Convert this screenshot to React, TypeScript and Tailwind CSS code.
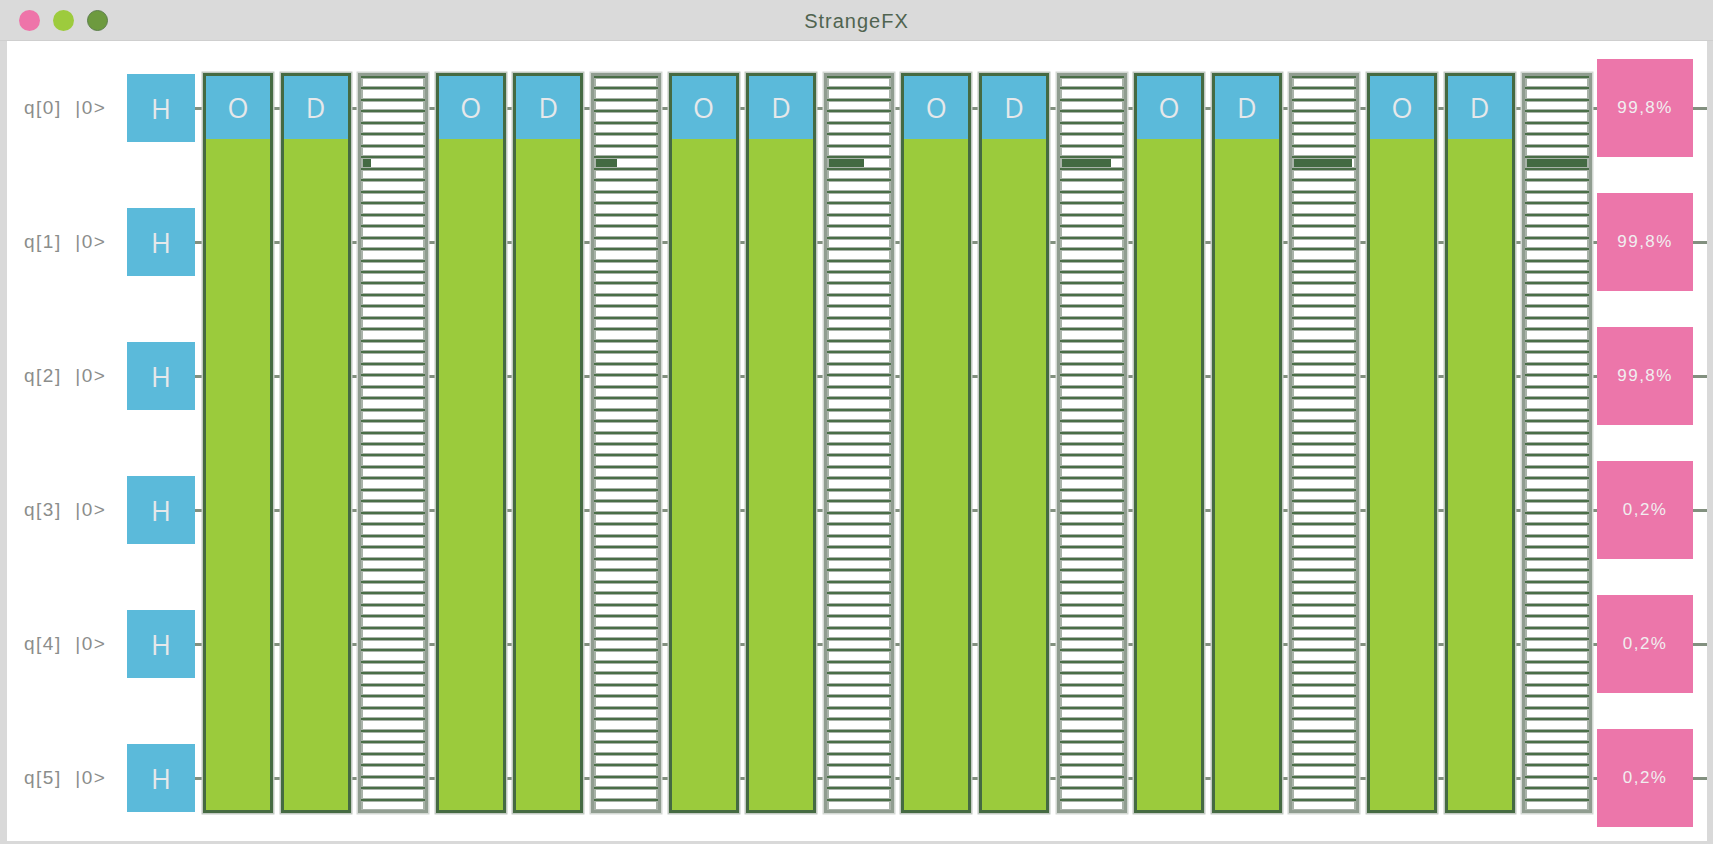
import React from 'react'

const QUBITS = [0, 1, 2, 3, 4, 5]
const RESULTS = ['99,8%', '99,8%', '99,8%', '0,2%', '0,2%', '0,2%']

// kans op |000111> na elke grover-stap
const FILLS = [13.5, 34.4, 59, 82, 96, 99.7]
const MARKED = 7

function GateColumn({ label }: { label: string }) {
  return (
    <div className="w-[70px] h-[740px] shrink-0 border-[3px] border-[#456a42] bg-[#9bcb3c] flex flex-col shadow-[0_0_0_1.5px_#c2c9c2]">
      <div className="h-[63px] bg-[#5bbada] flex items-center justify-center text-[27px] leading-none text-[#e6e8ea] font-['Open_Sans',sans-serif]">
        {label}
      </div>
    </div>
  )
}

function StateColumn({ fill }: { fill: number }) {
  const rows = Array.from({ length: 64 }, (_, i) => i)
  return (
    <div className="w-[70px] h-[740px] shrink-0 border-[3px] border-[#909d90] bg-white flex flex-col shadow-[0_0_0_1.5px_#d3d8d3]">
      {rows.map((r) => (
        <div
          key={r}
          className="flex-1 border-t-2 border-[#4a6e47] bg-[#a9b3a9] px-[2px] py-[1px]"
        >
          <div className="h-full bg-white">
            {r === MARKED && (
              <div
                className="h-full bg-[#436a42]"
                style={{ width: `${fill}%` }}
              />
            )}
          </div>
        </div>
      ))}
    </div>
  )
}

export default function App() {
  const columns: { kind: 'O' | 'D' | 'S'; fill: number }[] = []
  FILLS.forEach((f) => {
    columns.push({ kind: 'O', fill: 0 })
    columns.push({ kind: 'D', fill: 0 })
    columns.push({ kind: 'S', fill: f })
  })

  return (
    <div className="w-[1713px] h-[844px] bg-[#d9d9d9] flex flex-col overflow-hidden font-['Liberation_Sans',Arial,sans-serif]">
      {/* titelbalk */}
      <div className="h-[41px] shrink-0 grid grid-cols-[1fr_auto_1fr] items-center border-b border-[#cfcfcf] bg-[#dadada]">
        <div className="flex items-center gap-[13px] pl-[19px]">
          <span className="w-[21px] h-[21px] rounded-full bg-[#ee74a9]" />
          <span className="w-[21px] h-[21px] rounded-full bg-[#9dcb3d]" />
          <span className="w-[21px] h-[21px] rounded-full bg-[#6d9a3f] border border-[#5d7f4d]" />
        </div>
        <div className="text-[20px] tracking-[1px] text-[#506450] pt-[1px]">
          StrangeFX
        </div>
        <div />
      </div>

      {/* circuit */}
      <div className="flex-1 ml-[7px] mr-[6px] mb-[3px] bg-white relative overflow-hidden flex">
        {/* draden */}
        <div className="absolute inset-0 flex flex-col">
          {QUBITS.map((q) => (
            <div key={q} className="h-[134px] shrink-0 flex items-center pl-[188px]">
              <div className="h-[3px] w-full bg-[#82907f]" />
            </div>
          ))}
        </div>

        {/* labels en H-poorten */}
        <div className="relative w-[196px] shrink-0 flex flex-col">
          {QUBITS.map((q) => (
            <div key={q} className="h-[134px] shrink-0 flex items-center">
              <div className="w-[120px] pl-[17px] text-[19px] tracking-[1.5px] whitespace-pre text-[#8b8d8b]">
                {`q[${q}]  |0>`}
              </div>
              <div className="w-[68px] h-[68px] bg-[#5bbada] flex items-center justify-center text-[27px] leading-none text-[#e6e8ea] font-['Open_Sans',sans-serif]">
                H
              </div>
            </div>
          ))}
        </div>

        {/* stappen */}
        <div className="relative flex items-start gap-[7.6px] pt-[32px]">
          {columns.map((c, i) =>
            c.kind === 'S' ? (
              <StateColumn key={i} fill={c.fill} />
            ) : (
              <GateColumn key={i} label={c.kind} />
            )
          )}
        </div>

        {/* resultaten */}
        <div className="relative ml-[5px] w-[96px] shrink-0 flex flex-col">
          {RESULTS.map((r, i) => (
            <div key={i} className="h-[134px] shrink-0 flex items-center">
              <div className="w-[96px] h-[98px] bg-[#ec76aa] flex items-center justify-center text-[17px] tracking-[1.5px] text-[#f1eef0]">
                {r}
              </div>
            </div>
          ))}
        </div>
      </div>
    </div>
  )
}
